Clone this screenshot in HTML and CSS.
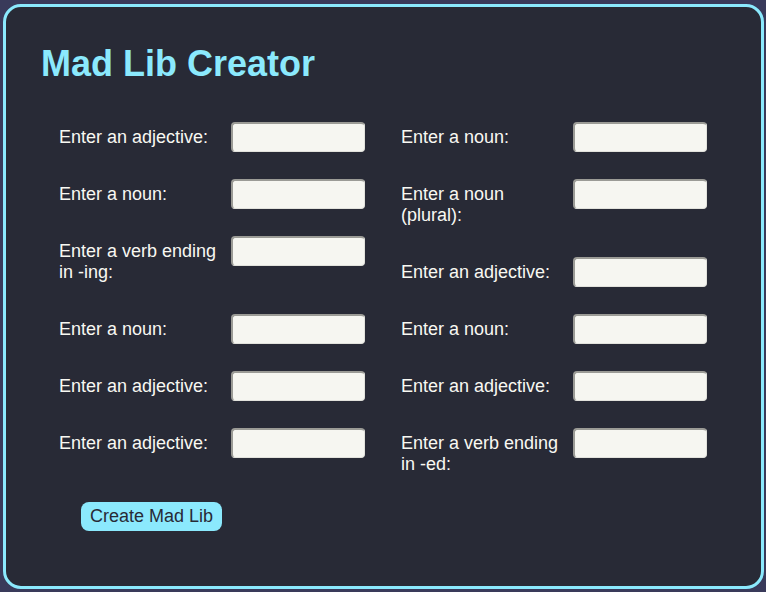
FILE: index.html
```html
<!DOCTYPE html>
<html lang="en">
<head>
<meta charset="utf-8">
<title>Mad Lib Creator</title>
<link rel="stylesheet" href="styles.css">
</head>
<body>
<div class="card">
  <h1 class="title">Mad Lib Creator</h1>
  <form class="form">
    <div class="columns">
      <div class="column">
        <div class="field"><label class="label" for="f1">Enter an adjective:</label><input class="input" id="f1" type="text"></div>
        <div class="field"><label class="label" for="f2">Enter a noun:</label><input class="input" id="f2" type="text"></div>
        <div class="field"><label class="label" for="f3">Enter a verb ending in -ing:</label><input class="input" id="f3" type="text"></div>
        <div class="field"><label class="label" for="f4">Enter a noun:</label><input class="input" id="f4" type="text"></div>
        <div class="field"><label class="label" for="f5">Enter an adjective:</label><input class="input" id="f5" type="text"></div>
        <div class="field"><label class="label" for="f6">Enter an adjective:</label><input class="input" id="f6" type="text"></div>
      </div>
      <div class="column">
        <div class="field"><label class="label" for="f7">Enter a noun:</label><input class="input" id="f7" type="text"></div>
        <div class="field"><label class="label" for="f8">Enter a noun (plural):</label><input class="input" id="f8" type="text"></div>
        <div class="field"><label class="label" for="f9">Enter an adjective:</label><input class="input" id="f9" type="text"></div>
        <div class="field"><label class="label" for="f10">Enter a noun:</label><input class="input" id="f10" type="text"></div>
        <div class="field"><label class="label" for="f11">Enter an adjective:</label><input class="input" id="f11" type="text"></div>
        <div class="field"><label class="label" for="f12">Enter a verb ending in -ed:</label><input class="input" id="f12" type="text"></div>
      </div>
    </div>
    <button class="button" type="button">Create Mad Lib</button>
  </form>
</div>
</body>
</html>
```
FILE: styles.css
```css
html, body {
  margin: 0;
  padding: 0;
  background: #393a5a;
}

body {
  font-family: "Liberation Sans", Arial, sans-serif;
  width: 766px;
  height: 592px;
  overflow: hidden;
}

.card {
  box-sizing: border-box;
  width: 761px;
  height: 585px;
  margin: 4px 0 0 3px;
  padding: 36px 32px 0 32px;
  background: #282a36;
  border: 3px solid #8be9fd;
  border-radius: 18px;
}

.title {
  margin: 0 0 0 3px;
  font-size: 36px;
  line-height: 41px;
  font-weight: bold;
  color: #8be9fd;
}

.form {
  margin: 0;
}

.columns {
  display: flex;
  gap: 35px;
  margin: 38px 0 0 20px;
}

.column {
  width: 307px;
  display: flex;
  flex-direction: column;
}

.field {
  display: flex;
  align-items: flex-start;
  margin-bottom: 27px;
}

.field:last-child {
  margin-bottom: 0;
}

.label {
  width: 165px;
  margin-right: 7px;
  padding: 5px 0 4px 1px;
  font-size: 18px;
  line-height: 21px;
  color: #f8f8f2;
}

.input {
  box-sizing: border-box;
  width: 134px;
  height: 30px;
  margin: 0;
  padding: 2px 4px;
  background: #f6f6f1;
  border-style: solid;
  border-width: 2px 1px 1px 2px;
  border-color: #9b9b96 #e2e2dc #e2e2dc #9b9b96;
  border-radius: 4px;
  font-family: "Liberation Sans", Arial, sans-serif;
  font-size: 14px;
}

.button {
  display: block;
  margin: 23px 0 0 43px;
  padding: 4px 9px;
  font-family: "Liberation Sans", Arial, sans-serif;
  font-size: 18px;
  line-height: 21px;
  color: #282a36;
  background: #8be9fd;
  border: none;
  border-radius: 8px;
}
```
